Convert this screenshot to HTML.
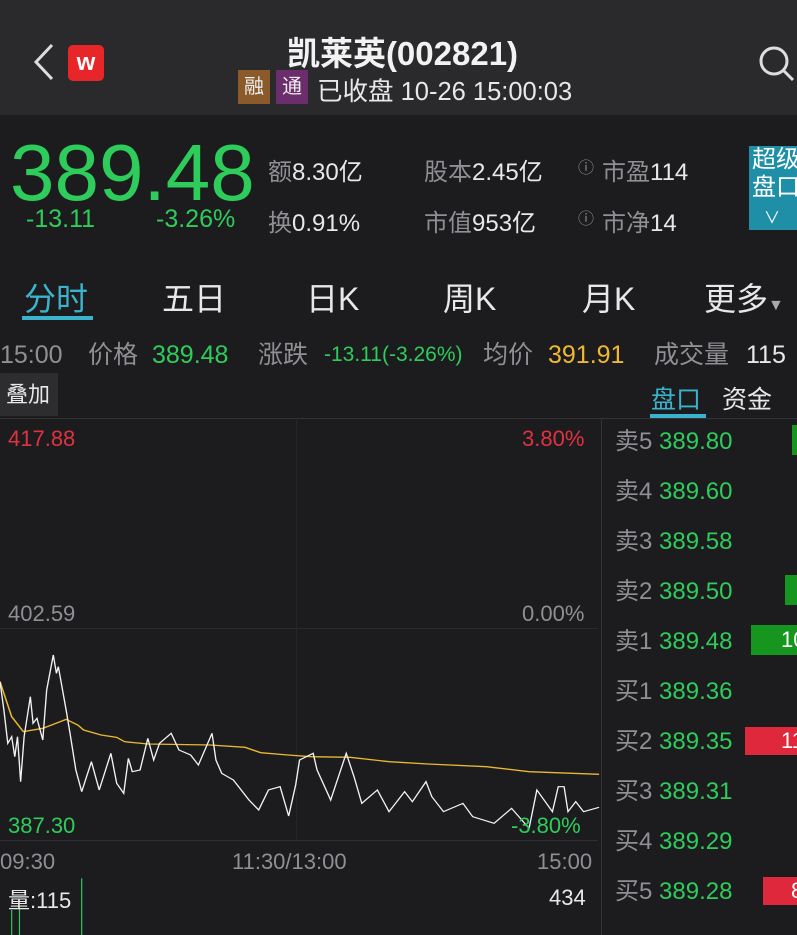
<!DOCTYPE html>
<html><head><meta charset="utf-8"><style>
*{margin:0;padding:0;box-sizing:border-box}
body{width:797px;height:935px;overflow:hidden;background:#1c1c1f;font-family:"Liberation Sans","Noto Sans CJK SC",sans-serif;color:#ddd;position:relative}
.a{position:absolute;white-space:nowrap}
.g{color:#2ecc5a}.gr{color:#8f8f94}.w{color:#e8e8e8}.r{color:#e0323f}.y{color:#f0b830}
.ir{top:340px;height:30px;line-height:30px;font-size:25px}
</style></head><body>
<div class="a" style="left:0;top:0;width:797px;height:115px;background:#2a2a2d"></div>
<svg class="a" style="left:30px;top:42px" width="26" height="40"><path d="M22 3 L6 20 L22 37" stroke="#ddd" stroke-width="3" fill="none"/></svg>
<div class="a" style="left:68px;top:45px;width:36px;height:36px;background:#e8262a;border-radius:5px;color:#fff;font-weight:bold;font-size:24px;text-align:center;line-height:36px">w</div>
<div class="a w" style="left:0;width:805px;text-align:center;top:27px;font-size:33px;font-weight:bold;color:#f2f2f2">凯莱英(002821)</div>
<div class="a" style="left:238px;top:70px;width:32px;height:34px;background:#8b5a2b;color:#eee;font-size:20px;text-align:center;line-height:34px">融</div>
<div class="a" style="left:276px;top:70px;width:32px;height:34px;background:#6b2d6b;color:#eee;font-size:20px;text-align:center;line-height:34px">通</div>
<div class="a w" style="left:317px;top:71px;font-size:25.5px">已收盘 10-26 15:00:03</div>
<svg class="a" style="left:757px;top:44px" width="40" height="40"><circle cx="17" cy="17" r="13" stroke="#ddd" stroke-width="3" fill="none"/><path d="M27 27 L36 36" stroke="#ddd" stroke-width="3"/></svg>

<div class="a g" style="left:10px;top:128px;font-size:80px;line-height:90px">389.48</div>
<div class="a g" style="left:26px;top:205px;font-size:25px">-13.11</div>
<div class="a g" style="left:156px;top:205px;font-size:25px">-3.26%</div>
<div class="a" style="left:268px;top:152px;font-size:24px"><span class="gr">额</span><span class="w">8.30亿</span></div>
<div class="a" style="left:268px;top:203px;font-size:24px"><span class="gr">换</span><span class="w">0.91%</span></div>
<div class="a" style="left:424px;top:152px;font-size:24px"><span class="gr">股本</span><span class="w">2.45亿</span></div>
<div class="a" style="left:424px;top:203px;font-size:24px"><span class="gr">市值</span><span class="w">953亿</span></div>
<div class="a gr" style="left:578px;top:154px;font-size:16px">ⓘ</div>
<div class="a gr" style="left:578px;top:205px;font-size:16px">ⓘ</div>
<div class="a" style="left:602px;top:152px;font-size:24px"><span class="gr">市盈</span><span class="w">114</span></div>
<div class="a" style="left:602px;top:203px;font-size:24px"><span class="gr">市净</span><span class="w">14</span></div>
<div class="a" style="left:749px;top:146px;width:48px;height:84px;background:#1f8fa8;color:#fff;font-size:24px;line-height:28px;padding-left:3px">超级<br>盘口<br><span style="font-size:16px;padding-left:12px">∨</span></div>

<div class="a" style="left:24px;top:274px;font-size:32px;color:#3ab4cc">分时</div>
<div class="a" style="left:22px;top:316px;width:71px;height:4px;background:#3ab4cc"></div>
<div class="a w" style="left:162px;top:274px;font-size:32px">五日</div>
<div class="a w" style="left:306px;top:274px;font-size:32px">日K</div>
<div class="a w" style="left:443px;top:274px;font-size:32px">周K</div>
<div class="a w" style="left:582px;top:274px;font-size:32px">月K</div>
<div class="a w" style="left:704px;top:274px;font-size:32px">更多<span style="font-size:16px;color:#aaa">▼</span></div>

<div class="a gr ir" style="left:0">15:00</div>
<div class="a gr ir" style="left:88px">价格</div>
<div class="a g ir" style="left:152px">389.48</div>
<div class="a gr ir" style="left:258px">涨跌</div>
<div class="a g ir" style="left:324px;font-size:21px">-13.11(-3.26%)</div>
<div class="a gr ir" style="left:483px">均价</div>
<div class="a y ir" style="left:548px">391.91</div>
<div class="a gr ir" style="left:654px">成交量</div>
<div class="a w ir" style="left:746px">115</div>
<div class="a w" style="left:0;top:373px;width:58px;height:43px;background:#2d2d30;font-size:22px;line-height:43px;padding-left:6px">叠加</div>
<div class="a" style="left:651px;top:380px;font-size:25px;color:#3ab4cc">盘口</div>
<div class="a" style="left:650px;top:414px;width:56px;height:4px;background:#3ab4cc"></div>
<div class="a w" style="left:722px;top:380px;font-size:25px">资金</div>
<div class="a" style="left:0;top:418px;width:797px;height:1px;background:#333"></div>
<div class="a" style="left:601px;top:418px;width:1px;height:517px;background:#333"></div>

<div class="a r" style="left:8px;top:426px;font-size:22px">417.88</div>
<div class="a r" style="left:522px;top:426px;font-size:22px">3.80%</div>
<div class="a gr" style="left:8px;top:601px;font-size:22px">402.59</div>
<div class="a gr" style="left:522px;top:601px;font-size:22px">0.00%</div>
<div class="a" style="left:0;top:628px;width:598px;height:1px;background:#2a2a2d"></div>
<div class="a" style="left:0;top:840px;width:598px;height:1px;background:#2e2e31"></div>
<div class="a" style="left:296px;top:418px;width:1px;height:422px;background:#262629"></div>
<svg class="a" style="left:0;top:600px" width="610" height="335" viewBox="0 0 1568 1005" preserveAspectRatio="none">
<polyline fill="none" stroke="#e8b830" stroke-width="4" points="0,245 30,350 60,395 110,385 170,358 200,375 215,390 260,405 300,412 320,425 380,432 540,435 630,442 670,458 740,465 800,470 900,472 1000,485 1100,492 1250,500 1360,515 1540,523"/>
<polyline fill="none" stroke="#f2f2f2" stroke-width="3.5" points="0,245 10,330 20,430 30,410 38,470 45,410 53,545 62,410 78,290 85,370 95,355 110,420 120,270 137,165 145,220 150,200 170,330 180,400 195,510 210,575 235,485 255,570 285,460 300,550 318,580 330,475 340,515 360,510 380,415 395,480 410,430 440,400 460,450 490,465 510,495 545,400 555,480 570,520 600,540 640,600 665,630 690,570 720,560 742,648 760,555 770,480 805,460 815,510 850,600 890,460 910,530 930,610 970,570 1000,635 1040,575 1060,605 1095,545 1110,590 1140,635 1190,610 1215,650 1270,670 1315,625 1360,685 1380,570 1420,635 1435,560 1450,560 1460,635 1480,605 1500,635 1540,622"/>
<line x1="210" y1="835" x2="210" y2="1005" stroke="#2ecc5a" stroke-width="3"/>
<line x1="30" y1="930" x2="30" y2="1005" stroke="#2ecc5a" stroke-width="3"/>
<line x1="50" y1="925" x2="50" y2="1005" stroke="#2ecc5a" stroke-width="3"/>
</svg>
<div class="a g" style="left:8px;top:813px;font-size:22px">387.30</div>
<div class="a g" style="left:511px;top:813px;font-size:22px">-3.80%</div>
<div class="a gr" style="left:0;top:849px;font-size:22px">09:30</div>
<div class="a gr" style="left:232px;top:849px;font-size:22px">11:30/13:00</div>
<div class="a gr" style="left:537px;top:849px;font-size:22px">15:00</div>
<div class="a w" style="left:8px;top:883px;font-size:22px">量:115</div>
<div class="a w" style="left:549px;top:885px;font-size:22px">434</div>

<div class="a" style="left:792px;top:425px;width:5px;height:30px;background:#16961e"></div>
<div class="a" style="left:785px;top:575px;width:12px;height:30px;background:#16961e"></div>
<div class="a" style="left:751px;top:625px;width:46px;height:30px;background:#16961e;color:#fff;font-size:22px;line-height:30px;padding-left:30px;overflow:hidden">10</div>
<div class="a" style="left:745px;top:727px;width:52px;height:28px;background:#e0283c;color:#fff;font-size:22px;line-height:28px;padding-left:36px;overflow:hidden">11</div>
<div class="a" style="left:763px;top:877px;width:34px;height:28px;background:#e0283c;color:#fff;font-size:22px;line-height:28px;padding-left:28px;overflow:hidden">8</div>
<div class="a" style="left:615px;top:417px;font-size:24px;line-height:50px">
<div><span class="gr">卖5</span> <span class="g">389.80</span></div>
<div><span class="gr">卖4</span> <span class="g">389.60</span></div>
<div><span class="gr">卖3</span> <span class="g">389.58</span></div>
<div><span class="gr">卖2</span> <span class="g">389.50</span></div>
<div><span class="gr">卖1</span> <span class="g">389.48</span></div>
<div><span class="gr">买1</span> <span class="g">389.36</span></div>
<div><span class="gr">买2</span> <span class="g">389.35</span></div>
<div><span class="gr">买3</span> <span class="g">389.31</span></div>
<div><span class="gr">买4</span> <span class="g">389.29</span></div>
<div><span class="gr">买5</span> <span class="g">389.28</span></div>
</div>
</body></html>
